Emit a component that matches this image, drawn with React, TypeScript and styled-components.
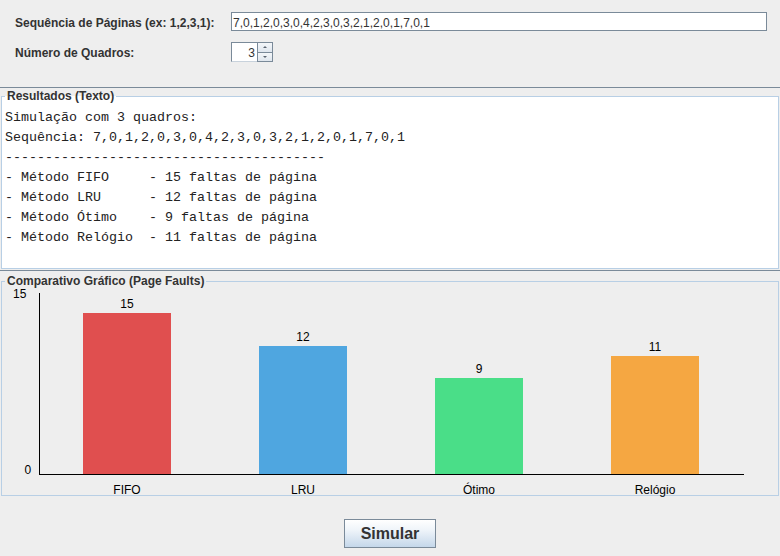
import React from "react";
import styled, { createGlobalStyle } from "styled-components";

const GlobalStyle = createGlobalStyle`
  html, body { margin: 0; padding: 0; background: #eeeeee; }
  #root { width: 780px; height: 556px; }
`;

const Window = styled.div`
  width: 780px;
  height: 556px;
  background: #eeeeee;
  display: flex;
  flex-direction: column;
  font-family: "Liberation Sans", Arial, sans-serif;
  color: #333333;
  overflow: hidden;
`;

const FormPanel = styled.div`
  height: 88px;
  box-sizing: border-box;
  padding: 12px 0 0 15px;
  display: grid;
  grid-template-columns: 216px 536px;
  grid-template-rows: 19px 20px;
  row-gap: 11px;
  align-content: start;
  border-bottom: 1px solid #7a8a99;
`;

const FieldLabel = styled.div`
  font-weight: bold;
  font-size: 12px;
  line-height: 15px;
  padding-top: 4px;
  white-space: nowrap;
`;

const TextField = styled.div`
  box-sizing: border-box;
  height: 19px;
  border: 1px solid #7a8a99;
  background: #ffffff;
  padding: 3px 0 0 1px;
  font-size: 12px;
  line-height: 14px;
  white-space: nowrap;
  overflow: hidden;
  color: #333333;
`;

const Spinner = styled.div`
  display: flex;
  width: 42px;
  height: 20px;
`;

const SpinnerField = styled.div`
  box-sizing: border-box;
  width: 26px;
  height: 20px;
  border: 1px solid #7a8a99;
  border-right: none;
  border-bottom-color: #c8d2dc;
  background: #ffffff;
  padding: 3px 2px 0 0;
  text-align: right;
  font-size: 12px;
  line-height: 14px;
  color: #333333;
`;

const SpinButtons = styled.div`
  display: flex;
  flex-direction: column;
  width: 16px;
  height: 20px;
`;

const SpinButton = styled.div<{ $down?: boolean }>`
  box-sizing: border-box;
  flex: 1;
  border: 1px solid #7a8a99;
  border-top: ${(p) => (p.$down ? "none" : "1px solid #7a8a99")};
  background: linear-gradient(#f4f7fa, #dfe6ee);
  display: flex;
  align-items: center;
  justify-content: center;
`;

const Arrow = styled.span<{ $down?: boolean }>`
  width: 0;
  height: 0;
  border-left: 2px solid transparent;
  border-right: 2px solid transparent;
  ${(p) =>
    p.$down
      ? "border-top: 2px solid #5a6470;"
      : "border-bottom: 2px solid #5a6470;"}
`;

const GroupBox = styled.fieldset<{ $height: number; $top: number; $white?: boolean }>`
  box-sizing: border-box;
  margin: ${(p) => p.$top}px 1px 0 1px;
  padding: 0;
  min-width: 0;
  height: ${(p) => p.$height}px;
  border: 1px solid #b8cfe5;
  background: ${(p) => (p.$white ? "#ffffff" : "transparent")};
`;

const GroupTitle = styled.legend`
  margin-left: 3px;
  padding: 0 2px;
  font-weight: bold;
  font-size: 12px;
  line-height: 15px;
  color: #333333;
`;

const ResultText = styled.div`
  padding: 4px 3px 0;
  font-family: "Liberation Mono", "Courier New", monospace;
  font-size: 13.33px;
  line-height: 20px;
  white-space: pre;
  color: #222222;
`;

const Divider = styled.div`
  height: 1px;
  margin-top: 1px;
  background: #7a8a99;
`;

const ButtonBar = styled.div`
  flex: 1;
  display: flex;
  justify-content: center;
  align-items: flex-start;
  padding-top: 23px;
`;

const ActionButton = styled.button`
  box-sizing: border-box;
  width: 92px;
  height: 29px;
  margin: 0;
  padding: 0;
  border: 1px solid #7a8a99;
  background: linear-gradient(to bottom, #ffffff 0%, #f0f5fa 35%, #c4d7ea 100%);
  font-family: "Liberation Sans", Arial, sans-serif;
  font-weight: bold;
  font-size: 16px;
  color: #333333;
`;

const ChartSvg = styled.svg`
  display: block;
  overflow: visible;
`;

const data = [
  { label: "FIFO", value: 15, color: "#e04f4f" },
  { label: "LRU", value: 12, color: "#4fa6e0" },
  { label: "Ótimo", value: 9, color: "#4ade88" },
  { label: "Relógio", value: 11, color: "#f5a742" },
];

const resultLines = [
  "Simulação com 3 quadros:",
  "Sequência: 7,0,1,2,0,3,0,4,2,3,0,3,2,1,2,0,1,7,0,1",
  "----------------------------------------",
  "- Método FIFO     - 15 faltas de página",
  "- Método LRU      - 12 faltas de página",
  "- Método Ótimo    - 9 faltas de página",
  "- Método Relógio  - 11 faltas de página",
];

function BarChart() {
  const axisX = 37;
  const baseY = 185;
  const slot = 176;
  const barW = 88;
  const max = 15;
  const fullH = 161;
  return (
    <ChartSvg width={776} height={206} viewBox="0 0 776 206">
      {data.map((d, i) => {
        const h = Math.floor((d.value * fullH) / max);
        const x = axisX + i * slot + (slot - barW) / 2;
        const top = baseY - h;
        const cx = x + barW / 2;
        return (
          <g key={d.label}>
            <rect x={x} y={top} width={barW} height={h} fill={d.color} />
            <text
              x={cx}
              y={top - 5}
              textAnchor="middle"
              fontFamily="Liberation Sans, Arial, sans-serif"
              fontSize={12}
              fill="#000"
            >
              {d.value}
            </text>
            <text
              x={cx}
              y={205}
              textAnchor="middle"
              fontFamily="Liberation Sans, Arial, sans-serif"
              fontSize={12}
              fill="#000"
            >
              {d.label}
            </text>
          </g>
        );
      })}
      <rect x={axisX} y={4} width={1} height={182} fill="#000" />
      <rect x={axisX} y={baseY} width={705} height={1} fill="#000" />
      <text x={11} y={9} fontFamily="Liberation Sans, Arial, sans-serif" fontSize={12} fill="#000">
        15
      </text>
      <text x={22.5} y={184.5} fontFamily="Liberation Sans, Arial, sans-serif" fontSize={12} fill="#000">
        0
      </text>
    </ChartSvg>
  );
}

export default function App() {
  return (
    <>
      <GlobalStyle />
      <Window>
        <FormPanel>
          <FieldLabel>Sequência de Páginas (ex: 1,2,3,1):</FieldLabel>
          <TextField>7,0,1,2,0,3,0,4,2,3,0,3,2,1,2,0,1,7,0,1</TextField>
          <FieldLabel>Número de Quadros:</FieldLabel>
          <Spinner>
            <SpinnerField>3</SpinnerField>
            <SpinButtons>
              <SpinButton>
                <Arrow />
              </SpinButton>
              <SpinButton $down>
                <Arrow $down />
              </SpinButton>
            </SpinButtons>
          </Spinner>
        </FormPanel>
        <GroupBox $height={180} $top={1} $white>
          <GroupTitle>Resultados (Texto)</GroupTitle>
          <ResultText>{resultLines.join("\n")}</ResultText>
        </GroupBox>
        <Divider />
        <GroupBox $height={222} $top={3}>
          <GroupTitle>Comparativo Gráfico (Page Faults)</GroupTitle>
          <BarChart />
        </GroupBox>
        <ButtonBar>
          <ActionButton>Simular</ActionButton>
        </ButtonBar>
      </Window>
    </>
  );
}
